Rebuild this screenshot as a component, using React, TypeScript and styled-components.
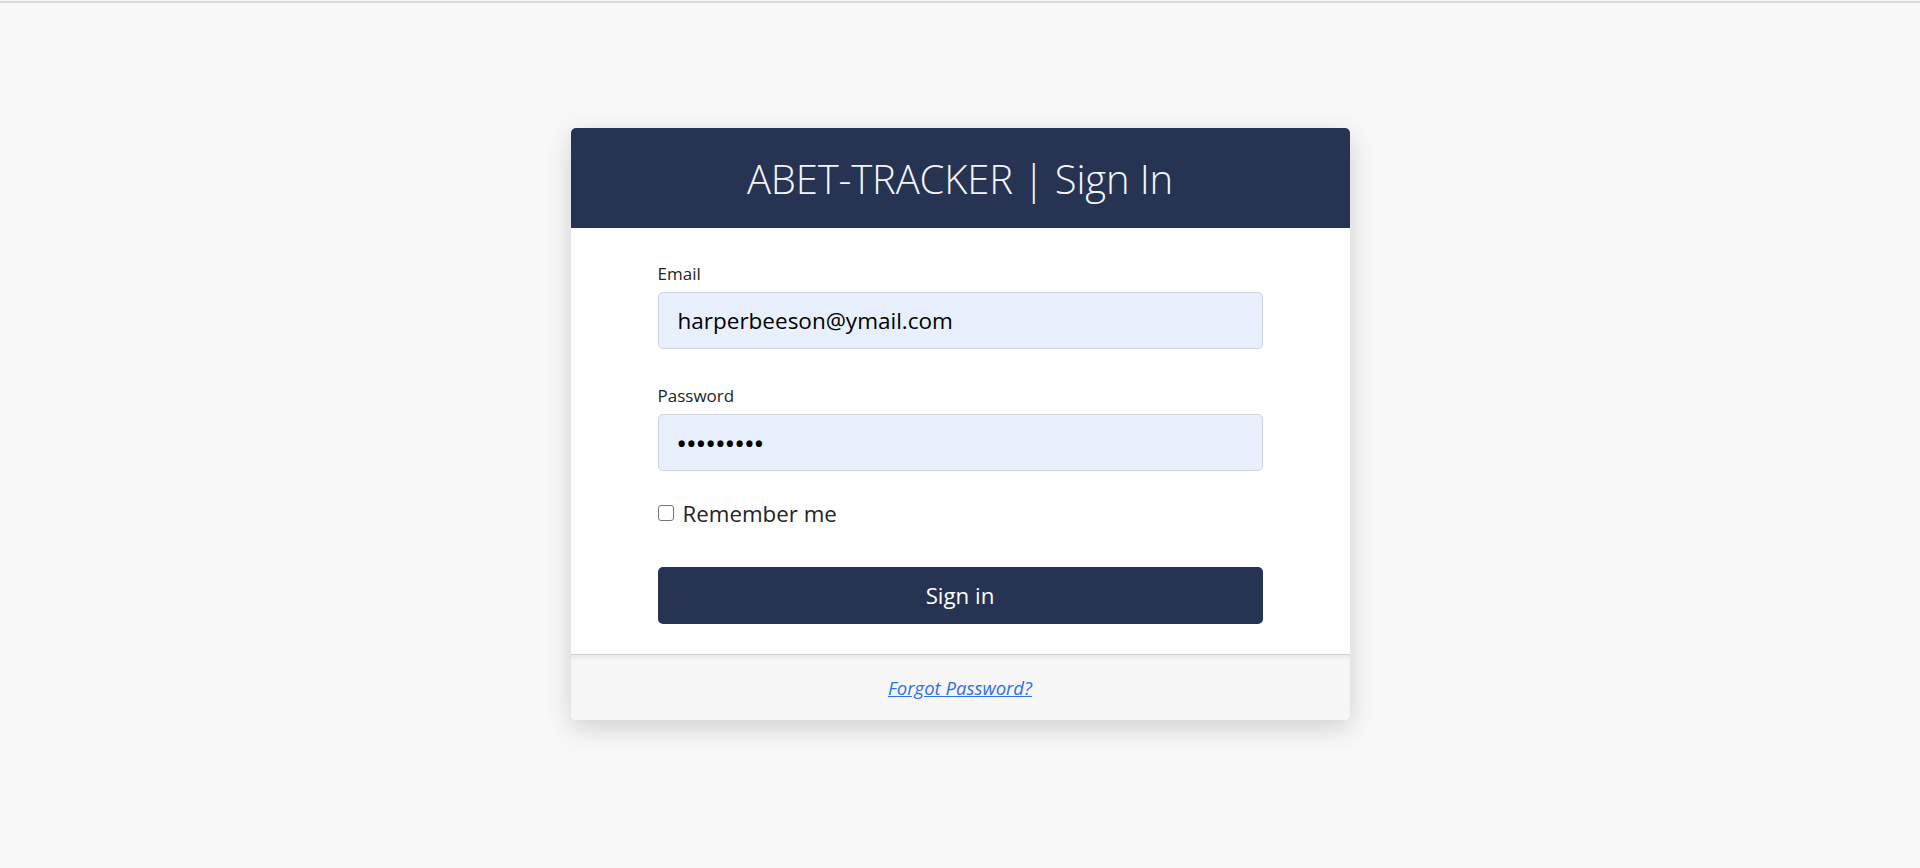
import React from "react";
import styled, { createGlobalStyle } from "styled-components";

const GlobalStyle = createGlobalStyle`
  html, body {
    margin: 0;
    padding: 0;
    background: #f8f8f8;
    font-family: "Open Sans", "Noto Sans", sans-serif;
  }
  * { box-sizing: border-box; }
`;

const Page = styled.div`
  min-height: 868px;
  background: #f8f8f8;
`;

const TopRule = styled.div`
  height: 2px;
  margin-top: 1px;
  background: #d9d9d9;
`;

const Card = styled.div`
  width: 779px;
  margin: 125px auto 0;
  background: #ffffff;
  border-radius: 5px;
  box-shadow: 0 8px 26px rgba(0, 0, 0, 0.16);
  overflow: hidden;
`;

const Header = styled.div`
  height: 100px;
  background: #263352;
  display: flex;
  align-items: center;
  justify-content: center;
`;

const Title = styled.h1`
  margin: 0;
  font-family: "Open Sans", sans-serif;
  font-weight: 300;
  font-size: 40px;
  color: #f4f6fa;
  letter-spacing: -0.15px;
`;

const Body = styled.form`
  padding: 34px 0 30px;
  display: flex;
  flex-direction: column;
  align-items: center;
`;

const Field = styled.div<{ $gap?: number }>`
  width: 605px;
  display: flex;
  flex-direction: column;
  margin-bottom: ${(p) => p.$gap ?? 0}px;
`;

const Label = styled.label`
  font-size: 17px;
  line-height: 24px;
  color: #212529;
  margin-bottom: 6px;
`;

const Input = styled.input<{ $secret?: boolean }>`
  height: 57px;
  width: 100%;
  padding: 0 19px;
  background: #e8f0fe;
  border: 1px solid #ced4da;
  border-radius: 5px;
  font-family: "Open Sans", sans-serif;
  font-size: ${(p) => (p.$secret ? "22px" : "22.5px")};
  font-weight: ${(p) => (p.$secret ? 700 : 400)};
  letter-spacing: ${(p) => (p.$secret ? "1.4px" : "0")};
  color: #000;
  outline: none;
`;

const CheckRow = styled.label`
  width: 605px;
  display: flex;
  align-items: center;
  gap: 9px;
  height: 30px;
  margin-top: 27px;
  font-size: 22.3px;
  color: #212529;
`;

const Check = styled.input`
  appearance: none;
  width: 16px;
  height: 16px;
  margin: 0;
  border: 1px solid #767676;
  border-radius: 3px;
  background: #fff;
`;

const SubmitButton = styled.button`
  width: 605px;
  height: 57px;
  margin-top: 39px;
  background: #263352;
  color: #fff;
  border: none;
  border-radius: 5px;
  font-family: "Open Sans", sans-serif;
  font-size: 22.3px;
  cursor: pointer;
`;

const Footer = styled.div`
  height: 66px;
  background: #f6f6f6;
  border-top: 1px solid #cfcfcf;
  box-shadow: inset 0 4px 6px -4px rgba(0, 0, 0, 0.12);
  display: flex;
  align-items: center;
  justify-content: center;
`;

const ForgotLink = styled.a`
  font-family: "Open Sans", sans-serif;
  font-style: italic;
  font-weight: 400;
  font-size: 18.5px;
  color: #2f6feb;
  text-decoration: underline;
`;

export default function App() {
  return (
    <Page>
      <GlobalStyle />
      <TopRule />
      <Card>
        <Header>
          <Title>ABET-TRACKER | Sign In</Title>
        </Header>
        <Body onSubmit={(e) => e.preventDefault()}>
          <Field $gap={35}>
            <Label htmlFor="email">Email</Label>
            <Input id="email" type="email" defaultValue="harperbeeson@ymail.com" />
          </Field>
          <Field>
            <Label htmlFor="password">Password</Label>
            <Input id="password" type="password" $secret defaultValue="123456789" />
          </Field>
          <CheckRow>
            <Check type="checkbox" />
            Remember me
          </CheckRow>
          <SubmitButton type="submit">Sign in</SubmitButton>
        </Body>
        <Footer>
          <ForgotLink href="#">Forgot Password?</ForgotLink>
        </Footer>
      </Card>
    </Page>
  );
}
